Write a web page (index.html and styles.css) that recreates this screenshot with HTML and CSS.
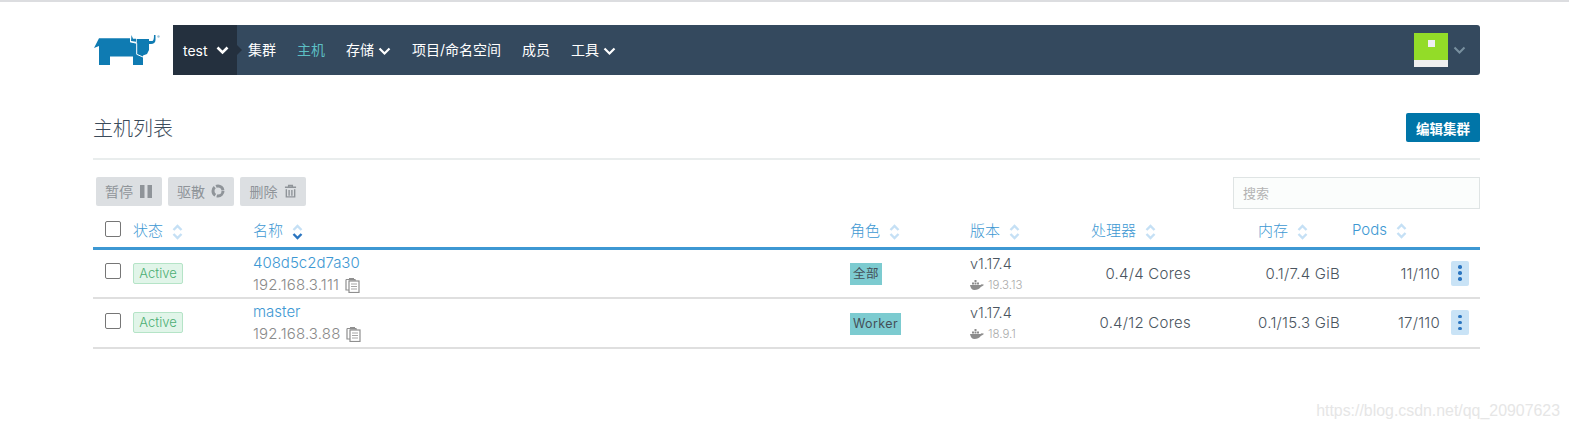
FILE: index.html
```html
<!DOCTYPE html>
<html lang="zh">
<head>
  <meta charset="UTF-8" />
  <title>主机列表</title>
  <link rel="stylesheet" href="styles.css">
</head>
<body>
  <svg class="sprites" width="0" height="0">
    <symbol id="sort" viewBox="0 0 11 16">
      <path d="M1.500 6 L5.500 2 L9.500 6 M1.500 10 L5.500 14 L9.500 10" fill="none" stroke="#c5e0f5" stroke-width="2.400"/>
    </symbol>
    <symbol id="sort-down" viewBox="0 0 11 16">
      <path d="M1.500 6 L5.500 2 L9.500 6" fill="none" stroke="#c5e0f5" stroke-width="2.400"/>
      <path d="M1.500 10 L5.500 14 L9.500 10" fill="none" stroke="#2b75c0" stroke-width="2.400"/>
    </symbol>
    <symbol id="copy" viewBox="0 0 15 16">
      <path d="M1 2.500 H10 V4 M1 2.500 V13 H4" fill="none" stroke="#8f8f8f" stroke-width="1.200"/>
      <rect x="4" y="4" width="10" height="11.500" fill="#fff" stroke="#8f8f8f" stroke-width="1.200"/>
      <rect x="4" y="1" width="5" height="2.500" fill="#8f8f8f"/>
      <path d="M6 7 H12 M6 9.500 H12 M6 12 H12" stroke="#a5a5a5" stroke-width="1"/>
    </symbol>
    <symbol id="whale" viewBox="0 0 14 10">
      <path d="M0 5 H10.500 C11 4 12.500 4 14 4.800 C13 6 12 6.500 11 6.800 C9.500 9 7 10 4.500 10 C2 10 .5 8 0 5 Z" fill="#8d8d8d"/>
      <path d="M2 2.500 H4 V4.500 H2 Z M4.500 2.500 H6.500 V4.500 H4.500 Z M7 2.500 H9 V4.500 H7 Z M4.500 0 H6.500 V2 H4.500 Z" fill="#8d8d8d"/>
    </symbol>
  </svg>

  <div class="page">
    <!-- 顶部导航 -->
    <nav class="topnav">
      <svg class="logo" viewBox="0 0 68 30" width="68" height="30">
        <path d="M1 13 L6 3.300 H37 V7 L43.700 8.300 V4 H56 V15 L54 19 L50 20.600 V30 H40 V21.600 H17 V30 H6 V11 Z" fill="#0f7bb2"/>
        <path d="M38.500 0 L40 3.800 H43 V6.800 L38 6 Z" fill="#0f7bb2"/>
        <path d="M37 6.700 L43.700 8.300 V19.300 L50 22" fill="none" stroke="#fff" stroke-width="1"/>
        <path d="M56 6 H59 C60.500 6 61 4 61 0 H62.500 V5 C62.500 7.500 60.500 9 58 9 H56 Z" fill="#0f7bb2"/>
        <circle cx="65.500" cy="1.500" r="1.200" fill="#9cc4da"/>
      </svg>
      <div class="navbar">
        <a class="nav-env">test
          <svg class="chev" viewBox="0 0 13 9" width="13" height="9"><path d="M1.500 1.500 L6.500 6.500 L11.500 1.500" fill="none" stroke="#fff" stroke-width="2.600"/></svg>
        </a>
        <div class="nav-links">
          <a>集群</a>
          <a class="active">主机</a>
          <a class="with-chev">存储
            <svg class="chev" viewBox="0 0 13 9" width="13" height="9"><path d="M1.500 1.500 L6.500 6.500 L11.500 1.500" fill="none" stroke="#fff" stroke-width="2.200"/></svg>
          </a>
          <a>项目/命名空间</a>
          <a>成员</a>
          <a class="with-chev">工具
            <svg class="chev" viewBox="0 0 13 9" width="13" height="9"><path d="M1.500 1.500 L6.500 6.500 L11.500 1.500" fill="none" stroke="#fff" stroke-width="2.200"/></svg>
          </a>
        </div>
        <div class="nav-user">
          <div class="avatar"><span></span></div>
          <svg viewBox="0 0 13 9" width="13" height="9"><path d="M1.500 1.500 L6.500 6.500 L11.500 1.500" fill="none" stroke="#78909f" stroke-width="2"/></svg>
        </div>
      </div>
    </nav>

    <!-- 标题 -->
    <header class="page-head">
      <h1>主机列表</h1>
      <button class="btn-edit">编辑集群</button>
    </header>

    <!-- 工具条 -->
    <div class="toolbar">
      <div class="bulk">
        <button>暂停
          <svg viewBox="0 0 14 14" width="14" height="14"><path d="M1 1 H5.500 V14 H1 Z M8.500 1 H13 V14 H8.500 Z" fill="#8f9499"/></svg>
        </button>
        <button>驱散
          <svg viewBox="0 0 14 14" width="14" height="14"><circle cx="7" cy="7" r="5" fill="none" stroke="#8f9499" stroke-width="3" stroke-dasharray="9 1.470"/></svg>
        </button>
        <button>删除
          <svg viewBox="0 0 14 14" width="13" height="14"><path d="M1 3 H13 M5 3 V1 H9 V3 M2.500 5 V13.300 H11.500 V5 M5.500 6 V12 M8.500 6 V12" fill="none" stroke="#8f9499" stroke-width="1.500"/></svg>
        </button>
      </div>
      <input class="search" type="text" placeholder="搜索">
    </div>

    <table class="hosts">
      <thead>
        <tr>
          <th class="c-check"><span class="box"></span></th>
          <th class="c-state">状态 <svg class="sort"><use href="#sort"/></svg></th>
          <th class="c-name">名称 <svg class="sort"><use href="#sort-down"/></svg></th>
          <th class="c-role">角色 <svg class="sort"><use href="#sort"/></svg></th>
          <th class="c-ver">版本 <svg class="sort"><use href="#sort"/></svg></th>
          <th class="c-cpu">处理器 <svg class="sort"><use href="#sort"/></svg></th>
          <th class="c-mem">内存 <svg class="sort"><use href="#sort"/></svg></th>
          <th class="c-pods">Pods <svg class="sort"><use href="#sort"/></svg></th>
          <th class="c-act"></th>
        </tr>
      </thead>
      <tbody>
        <tr>
          <td class="c-check"><span class="box"></span></td>
          <td class="c-badge"><span class="state">Active</span></td>
          <td>
            <a class="host-link">408d5c2d7a30</a>
            <div class="ip">192.168.3.111 <svg class="copy"><use href="#copy"/></svg></div>
          </td>
          <td><span class="role">全部</span></td>
          <td>
            <div>v1.17.4</div>
            <div class="docker"><svg class="whale"><use href="#whale"/></svg> 19.3.13</div>
          </td>
          <td class="num">0.4/4 Cores</td>
          <td class="num">0.1/7.4 GiB</td>
          <td class="num">11/110</td>
          <td class="c-act"><button class="more"><i></i><i></i><i></i></button></td>
        </tr>
        <tr>
          <td class="c-check"><span class="box"></span></td>
          <td class="c-badge"><span class="state">Active</span></td>
          <td>
            <a class="host-link">master</a>
            <div class="ip">192.168.3.88 <svg class="copy"><use href="#copy"/></svg></div>
          </td>
          <td><span class="role">Worker</span></td>
          <td>
            <div>v1.17.4</div>
            <div class="docker"><svg class="whale"><use href="#whale"/></svg> 18.9.1</div>
          </td>
          <td class="num">0.4/12 Cores</td>
          <td class="num">0.1/15.3 GiB</td>
          <td class="num">17/110</td>
          <td class="c-act"><button class="more"><i></i><i></i><i></i></button></td>
        </tr>
      </tbody>
    </table>
  </div>

  <div class="watermark">https://blog.csdn.net/qq_20907623</div>
</body>
</html>
```

FILE: styles.css
```css
* {
  box-sizing: border-box;
}

html, body {
  height: 100%;
}

body {
  margin: 0;
  border-top: 2px solid #dcdde0;
  background-color: #fff;
  color: #4a5560;
  font-family: Inter, "Noto Sans CJK SC", sans-serif;
  font-size: 14.500px;
  font-weight: 300;
  overflow: hidden;
}

.sprites {
  position: absolute;
}

.page {
  padding: 23px 89px 0 93px;
}

/* nav */
.topnav {
  display: flex;
  align-items: center;
  height: 50px;
}

.logo {
  flex: none;
  width: 68px;
  margin-right: 12px;
}

.navbar {
  flex: 1;
  display: flex;
  align-items: stretch;
  height: 50px;
  background-color: #34495e;
  border-radius: 0 3px 3px 0;
  color: #fff;
  font-size: 14px;
  font-weight: 400;
}

.nav-env {
  position: relative;
  display: flex;
  align-items: center;
  gap: 8px;
  width: 64px;
  padding-left: 10px;
  background-color: #24303e;
}

.nav-env::after {
  content: "";
  position: absolute;
  left: 100%;
  top: 20px;
  border-left: 5px solid #24303e;
  border-top: 5px solid transparent;
  border-bottom: 5px solid transparent;
}

.nav-links {
  display: flex;
  align-items: center;
  gap: 21px;
  padding: 0 0 3px 11px;
}

.nav-links .chev {
  margin-top: 5px;
}

.nav-links .active {
  color: #5cbfc4;
}

.with-chev {
  display: flex;
  align-items: center;
  gap: 4px;
}

.nav-user {
  margin-left: auto;
  display: flex;
  align-items: center;
  gap: 5px;
  padding-right: 14px;
}

.avatar {
  display: flex;
  justify-content: center;
  width: 34px;
  height: 34px;
  background: linear-gradient(#93dc28 27px, #efefef 27px);
}

.avatar span {
  width: 7px;
  height: 7px;
  margin-top: 7px;
  background-color: #efefef;
}

/* head */
.page-head {
  display: flex;
  justify-content: space-between;
  align-items: center;
  height: 85px;
  padding-top: 22px;
  border-bottom: 2px solid #e9eded;
}

.page-head h1 {
  margin: 0 0 1px;
  font-size: 20px;
  font-weight: 300;
  color: #3a4a5a;
}

.btn-edit {
  width: 74px;
  height: 29px;
  padding: 0;
  border: 0;
  border-radius: 2px;
  background-color: #0075a8;
  color: #fff;
  font-family: inherit;
  font-size: 13.500px;
  font-weight: 700;
}

/* toolbar */
.toolbar {
  display: flex;
  justify-content: space-between;
  align-items: flex-start;
  padding-top: 17px;
  height: 54px;
}

.bulk {
  display: flex;
  gap: 6px;
  padding-left: 3px;
}

.bulk button {
  display: flex;
  align-items: center;
  justify-content: center;
  gap: 6px;
  width: 66px;
  height: 29px;
  padding: 0 0 1px;
  border: 0;
  border-radius: 2px;
  background-color: #dcdfe2;
  color: #8f9499;
  font-family: inherit;
  font-size: 14px;
}

.search {
  width: 247px;
  height: 32px;
  padding: 0 9px;
  border: 1px solid #dfe4e4;
  background-color: #fbfdfc;
  font-family: inherit;
  font-size: 13px;
}

.search::placeholder {
  color: #b3b3b3;
}

/* table */
.hosts {
  width: 100%;
  table-layout: fixed;
  border-collapse: separate;
  border-spacing: 0;
}

.hosts th {
  height: 36px;
  padding: 0 0 3px;
  border-bottom: 3px solid #3d98d3;
  color: #3d98d3;
  font-weight: 300;
  font-size: 15px;
  text-align: left;
  white-space: nowrap;
}

.hosts td {
  height: 49px;
  padding: 0;
  border-bottom: 2px solid #dfdfdf;
  white-space: nowrap;
  line-height: 22px;
}

.hosts tr + tr td {
  height: 50px;
}

.c-check {
  width: 40px;
  padding-left: 12px !important;
}

.hosts td.c-check {
  padding-bottom: 5px;
}

.hosts td.c-badge {
  padding-bottom: 2px;
}

.c-state { width: 120px; }
.c-name { width: 597px; }
.c-role { width: 120px; }
.c-ver { width: 121px; }
.c-cpu { width: 110px; }
.c-mem { width: 149px; padding-left: 57px !important; }
.c-pods { width: 100px; padding-left: 2px !important; }
.c-act { width: 30px; }

.hosts td.num {
  text-align: right;
  padding-right: 10px;
  font-size: 15px;
  letter-spacing: .25px;
}

.sort {
  width: 11px;
  height: 16px;
  margin-left: 5px;
  vertical-align: -4px;
}

.box {
  display: block;
  width: 16px;
  height: 16px;
  border: 1px solid #767676;
  border-radius: 2px;
  background-color: #fff;
}

.state {
  display: inline-block;
  width: 50px;
  height: 21px;
  border: 1px solid #b5e4c7;
  border-radius: 2px;
  background-color: #e1f5e9;
  color: #4cae73;
  font-size: 13px;
  line-height: 19px;
  text-align: center;
}

.host-link {
  display: block;
  color: #3d98d3;
  font-size: 15px;
}

.ip {
  display: flex;
  align-items: center;
  gap: 6px;
  color: #8a8a8a;
  font-size: 15px;
  letter-spacing: .15px;
}

.copy {
  width: 15px;
  height: 16px;
}

.role {
  display: inline-block;
  height: 22px;
  padding: 0 3px;
  background-color: #7ccbd0;
  color: #444f57;
  font-size: 12.500px;
  font-weight: 400;
  letter-spacing: .4px;
  line-height: 22px;
}

.docker {
  display: flex;
  align-items: center;
  gap: 4px;
  color: #aaa;
  font-size: 11.500px;
  line-height: 20px;
}

.whale {
  width: 14px;
  height: 10px;
}

.more {
  display: flex;
  flex-direction: column;
  align-items: center;
  justify-content: center;
  gap: 2.500px;
  width: 18px;
  height: 25px;
  margin: 0 0 1px 1px;
  padding: 0;
  border: 0;
  border-radius: 2px;
  background-color: #c9e3f6;
}

.more i {
  width: 3.500px;
  height: 3.500px;
  border-radius: 50%;
  background-color: #2b75c0;
}

.watermark {
  position: absolute;
  right: 9px;
  top: 402px;
  color: #e6e6e6;
  font-family: "Liberation Sans", sans-serif;
  font-size: 15.900px;
}
```
